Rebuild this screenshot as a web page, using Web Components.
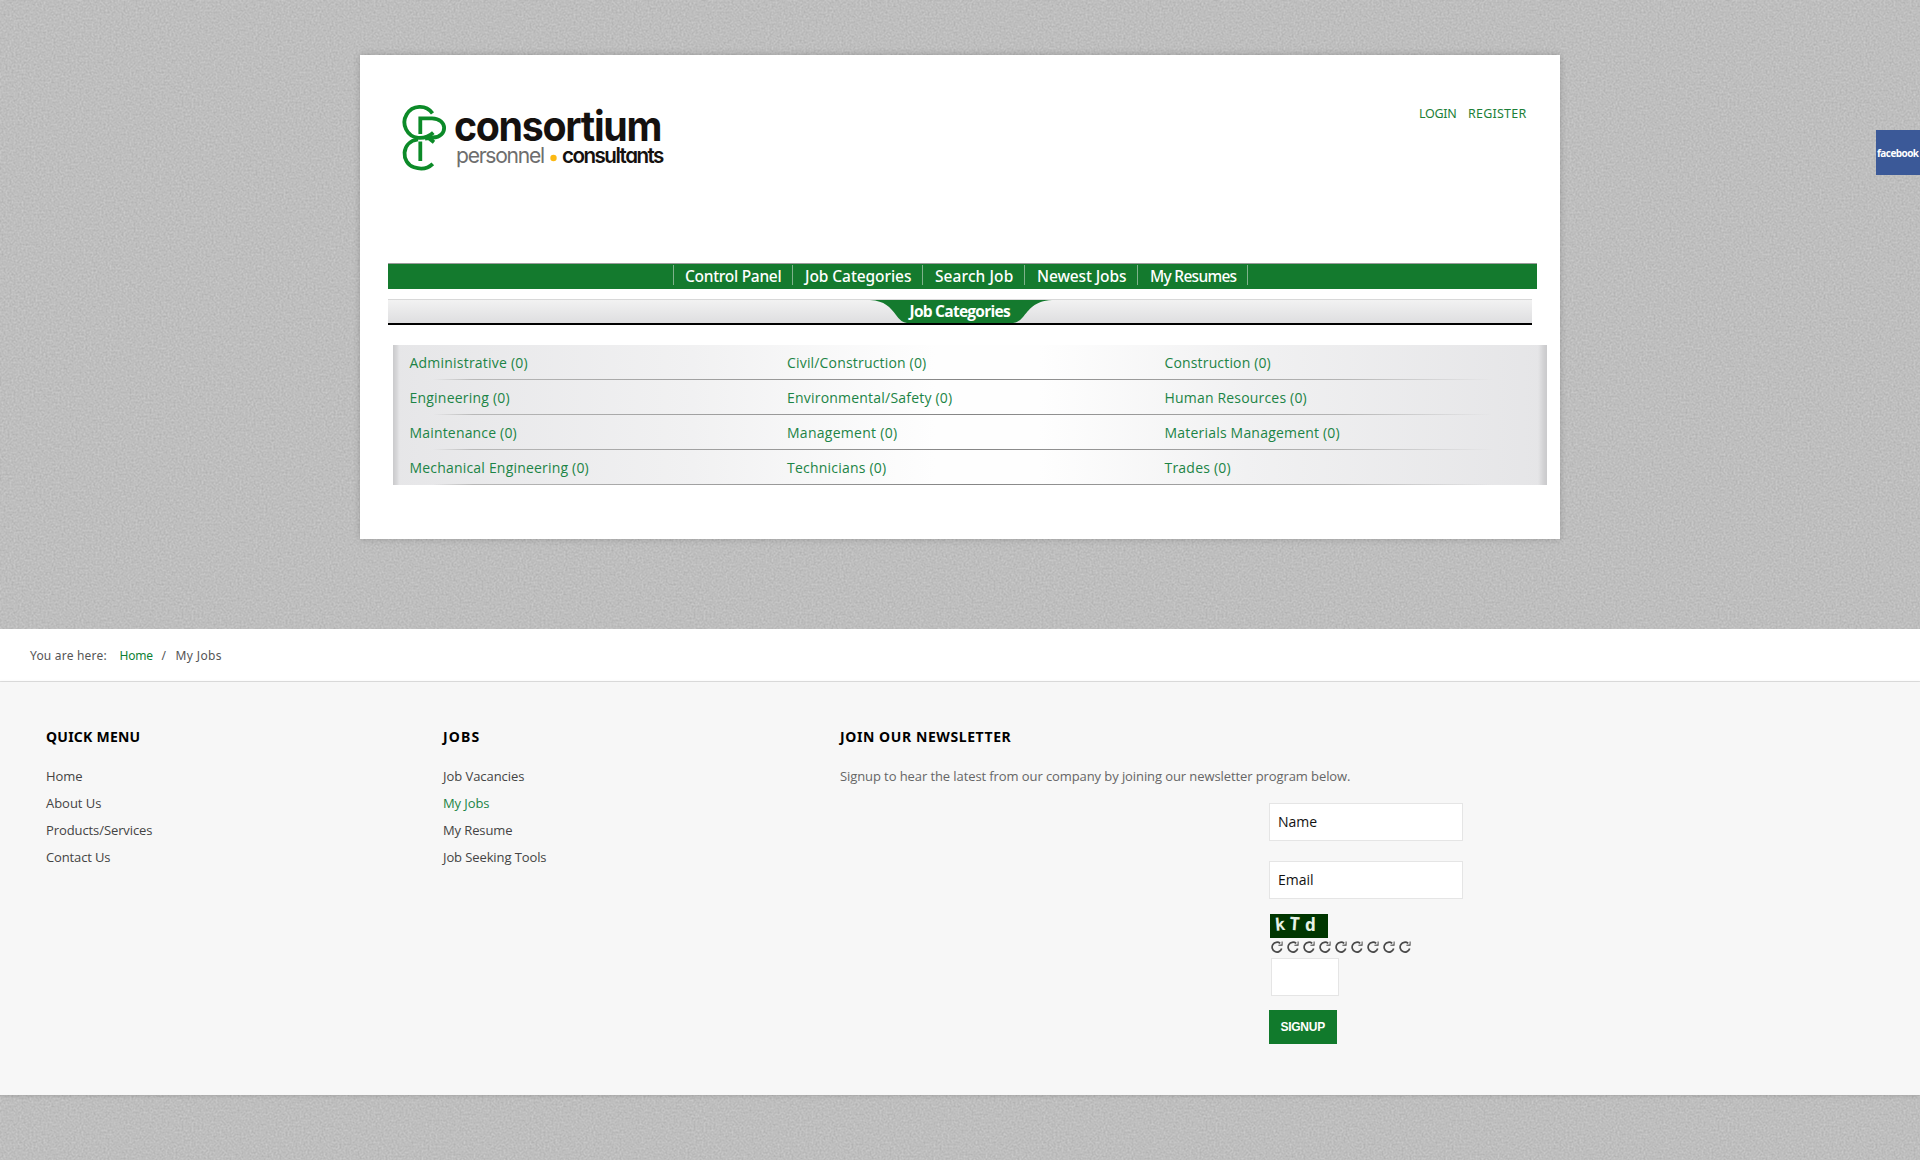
<!DOCTYPE html>
<html lang="en">
<head>
<meta charset="utf-8">
<title>My Jobs</title>
<style>
html,body{margin:0;padding:0}
body{font-family:"Open Sans","Noto Sans",sans-serif;background:#bdbdbd;width:1920px;height:1160px;overflow:hidden}
</style>
</head>
<body>
<job-site></job-site>
<script>
function define(name, html, ready){
  customElements.define(name, class extends HTMLElement{
    connectedCallback(){
      if(this.shadowRoot) return;
      this.attachShadow({mode:'open'}).innerHTML = typeof html==='function' ? html(this) : html;
      if(ready) ready(this);
    }
  });
}

/* Text run spaced to a given advance width (attribute w). */
define('fit-text', '<style>:host{display:inline-block;white-space:nowrap}span{display:inline-block}</style><span></span>', el=>{
  const s=el.shadowRoot.querySelector('span'), t=el.getAttribute('t'), w=+el.getAttribute('w');
  s.textContent=t;
  const natural=s.getBoundingClientRect().width;
  s.style.letterSpacing=((w-.6-natural)/t.length)+'px';
  el.style.width=w+'px';
});

define('fabric-ground', `<style>:host{display:block;position:absolute;inset:0;z-index:-1}svg{display:block}</style>
<svg width="1920" height="1160"><defs>
<filter id="n" x="0" y="0" width="100%" height="100%" color-interpolation-filters="sRGB">
<feTurbulence type="fractalNoise" baseFrequency=".5" numOctaves="2" seed="8"/>
<feColorMatrix values=".13 .06 0 0 .65  .13 .06 0 0 .65  .13 .06 0 0 .65  0 0 0 0 1"/></filter></defs>
<rect width="1920" height="1160" fill="#bdbdbd" filter="url(#n)"/></svg>`);

define('brand-logo', `<style>:host{display:block}svg{display:block;overflow:visible}text{font-family:Inter,sans-serif;font-feature-settings:"cv11"}</style>
<svg width="270" height="70" viewBox="400 102 270 70">
<g fill="none" stroke="#0c8a28" stroke-width="3.8">
<path d="M432.500 113.300A15.500 15.500 0 1 0 418 137.800Q427 138.500 433.300 132.600"/>
<path d="M420.300 134V118.300H432C448 118.500 448 137 433 137.500L425 138.500M428.500 138L434 142.300"/>
<path d="M418 139.400C400.500 142 401 163 414 167.300C421 169.600 428 168.400 432.800 163.800"/>
<path d="M420.300 141.500V161"/>
</g>
<text transform="translate(454 141) scale(.96 1)" font-weight="700" font-size="41" textLength="217" fill="#15110f">consortium</text>
<text transform="translate(456 162.700) scale(.98 1)" font-weight="400" font-size="21.500" textLength="91" fill="#6e6e6e">personnel</text>
<circle cx="553.500" cy="158" r="3.200" fill="#fcb913"/>
<text transform="translate(562 162.700) scale(.98 1)" font-weight="600" font-size="21" textLength="104.500" fill="#15110f">consultants</text>
</svg>`);

define('account-links', `<style>:host{display:flex;gap:11px;font:12.500px/18px "Noto Sans";color:#1c8038}</style>
<fit-text t="LOGIN" w="38"></fit-text><fit-text t="REGISTER" w="59"></fit-text>`);

define('main-nav', `<style>:host{display:flex;box-sizing:border-box;width:1149px;height:26px;border-top:1px solid #9a9a9a;background:#147a2e;padding-left:285px;color:#fff;font:500 15.500px/25px "Noto Sans"}
div{height:20px;margin-top:1px;border-left:1px solid #7fb28b;box-sizing:border-box;padding-left:11px;line-height:22px}</style>
<div style="width:119px"><fit-text t="Control Panel" w="97"></fit-text></div>
<div style="width:130px;padding-left:12px"><fit-text t="Job Categories" w="107"></fit-text></div>
<div style="width:102px;padding-left:12px"><fit-text t="Search Job" w="79"></fit-text></div>
<div style="width:113px;padding-left:12px"><fit-text t="Newest Jobs" w="90"></fit-text></div>
<div style="width:110px;padding-left:12px"><fit-text t="My Resumes" w="87"></fit-text></div><div></div>`);

define('section-title', `<style>:host{display:flex;justify-content:center;box-sizing:border-box;width:1144px;height:26px;border-top:1px solid #d8d8d8;border-bottom:2px solid #000;background:linear-gradient(#f2f2f2,#dedee0)}
div{width:182px;height:23px;display:grid;margin-left:2px}svg,fit-text{grid-area:1/1}svg{display:block}
fit-text{justify-self:center;margin-left:-2px;color:#fff;font:bold 15.500px/22px "Open Sans"}</style>
<div><svg width="182" height="23"><path d="M0 0H182C164 1 159 10 153 17Q149 22.500 143 23H37Q31 22.500 26 15C20 7 15 1 0 0Z" fill="#147a2e"/></svg><fit-text t="Job Categories" w="101"></fit-text></div>`);

define('category-row', el=>`<style>:host{display:grid;grid-template-columns:377.500px 377.500px 1fr;box-sizing:border-box;height:35px;padding-left:16.500px;font:14px/35px "Open Sans";color:#1c8446;background:linear-gradient(90deg,transparent 40px,#b8b8b8 80px,#858585 50%,#b5b5b5 950px,transparent 1100px) bottom/100% 1px no-repeat}</style>`+
 el.getAttribute('items').split('|').map(s=>{const [t,w]=s.split(':');return `<div><fit-text t="${t}" w="${w}"></fit-text></div>`}).join(''));

define('category-table', `<style>:host{display:block;width:1154px;background:linear-gradient(90deg,#cacacc,#d8d8da 4px,#e4e4e6 6px,transparent 7px,transparent 1145px,#d0d0d2 1151px,#cacacc),linear-gradient(90deg,#e6e6e8,#f1f1f2 26%,#fefefe 47%,#fefefe 56%,#f1f1f2 74%,#e5e5e7)}</style>
<category-row items="Administrative (0):119|Civil/Construction (0):140|Construction (0):107"></category-row>
<category-row items="Engineering (0):101|Environmental/Safety (0):166|Human Resources (0):143"></category-row>
<category-row items="Maintenance (0):108|Management (0):111|Materials Management (0):176"></category-row>
<category-row items="Mechanical Engineering (0):180|Technicians (0):100|Trades (0):67"></category-row>`);

define('crumb-trail', `<style>:host{display:flex;box-sizing:border-box;height:53px;padding-left:30px;background:#fff;border-bottom:1px solid #e0e0e0;font:12px/54px "Noto Sans";color:#555}
.h{color:#0d7f35;margin-left:12px}.s{margin:0 8px}</style>
<fit-text t="You are here:" w="77.500"></fit-text><fit-text class="h" t="Home" w="34"></fit-text><fit-text class="s" t="/" w="6"></fit-text><fit-text t="My Jobs" w="47"></fit-text>`);

define('foot-title', el=>`<style>:host{display:block;font:bold 14px/20px "Noto Sans";color:#000;height:20px;margin-bottom:16px}</style><fit-text t="${el.getAttribute('t')}" w="${el.getAttribute('w')}"></fit-text>`);

define('link-column', el=>`<style>:host{display:block}p{margin:0;height:27px;font:13px/27px "Open Sans";color:#444}.on{color:#1c8446}</style>
<foot-title t="${el.getAttribute('t')}" w="${el.getAttribute('w')}"></foot-title>`+
 el.getAttribute('links').split('|').map(s=>{const [t,w,on]=s.split(':');return `<p class="${on||''}"><fit-text t="${t}" w="${w}"></fit-text></p>`}).join(''));

define('form-field', '<style>:host{display:block;box-sizing:border-box;width:194px;height:38px;border:1px solid #e5e5e5;background:#fff;padding-left:8px;font:14px/36px "Open Sans";color:#111}</style><slot></slot>');

define('captcha-box', `<style>:host{display:block;width:160px}svg{display:block}.c{margin-left:1px}.r{display:flex;gap:4px;margin:3px 0 0 2px}</style>
<svg class="c" width="58" height="24"><rect width="58" height="24" fill="#003600"/>
<g fill="#e6f2e6" font-family="DejaVu Sans Mono" font-weight="bold" font-size="17"><text x="5" y="16.500" transform="rotate(-5 9 11)">k</text><text x="19" y="16" font-size="18" transform="rotate(4 24 11)">T</text><text x="35" y="16.500" font-size="18">d</text></g></svg>
<div class="r">${'<svg width="12" height="12"><path d="M9.200 2.400A4.900 4.900 0 1 0 10.700 7.600" fill="none" stroke="#4a4a4a" stroke-width="1.700"/><path d="M11.600 .6V4.800H7.400V3.800L10.600 3.400V.6Z" fill="#4a4a4a"/></svg>'.repeat(9)}</div>`);

define('news-signup', `<style>:host{display:block}p{margin:0;height:27px;font:13px/27px "Open Sans";color:#666}
.f{display:flex;flex-direction:column;align-items:flex-start;padding:13px 0 0 429px}
.e{margin:20px 0 15px}.s{width:68px;margin:5px 0 14px 2px}
.b{width:68px;height:34px;background:#117a2c;color:#fff;font:bold 12px/34px "Liberation Sans";display:flex;justify-content:center}</style>
<foot-title t="JOIN OUR NEWSLETTER" w="172"></foot-title>
<p><fit-text t="Signup to hear the latest from our company by joining our newsletter program below." w="511"></fit-text></p>
<div class="f"><form-field>Name</form-field><form-field class="e">Email</form-field><captcha-box></captcha-box><form-field class="s"></form-field>
<div class="b"><fit-text t="SIGNUP" w="45"></fit-text></div></div>`);

define('site-footer', `<style>:host{display:grid;grid-template-columns:397px 397px 1fr;box-sizing:border-box;height:413px;background:#f7f7f7;padding:45px 0 0 46px;box-shadow:0 1px 4px #0002}</style>
<link-column t="QUICK MENU" w="95" links="Home:37|About Us:56|Products/Services:107|Contact Us:65"></link-column>
<link-column t="JOBS" w="38" links="Job Vacancies:82|My Jobs:47:on|My Resume:70|Job Seeking Tools:104"></link-column>
<news-signup></news-signup>`);

define('facebook-tab', '<style>:host{display:flex;justify-content:center;position:absolute;right:0;top:130px;width:44px;height:45px;background:#3b5998;color:#fff;font:bold 10px/46px "Open Sans"}</style><fit-text t="facebook" w="42"></fit-text>');

define('job-site', `<style>:host{display:block;position:relative;z-index:0;width:1920px;height:1160px;overflow:hidden;padding-top:55px;box-sizing:border-box}
main{width:1200px;height:484px;margin:0 auto 90px;box-sizing:border-box;background:#fff;padding:47px 0 0 28px;box-shadow:0 0 7px #0003}
header{display:flex;justify-content:space-between;height:161px;padding:0 33px 0 12px}
account-links{margin-top:3px}section-title{margin:10px 0 20px}category-table{margin-left:5px}</style>
<fabric-ground></fabric-ground>
<main><header><brand-logo></brand-logo><account-links></account-links></header>
<main-nav></main-nav><section-title></section-title><category-table></category-table></main>
<crumb-trail></crumb-trail><site-footer></site-footer><facebook-tab></facebook-tab>`);
</script>
</body>
</html>
